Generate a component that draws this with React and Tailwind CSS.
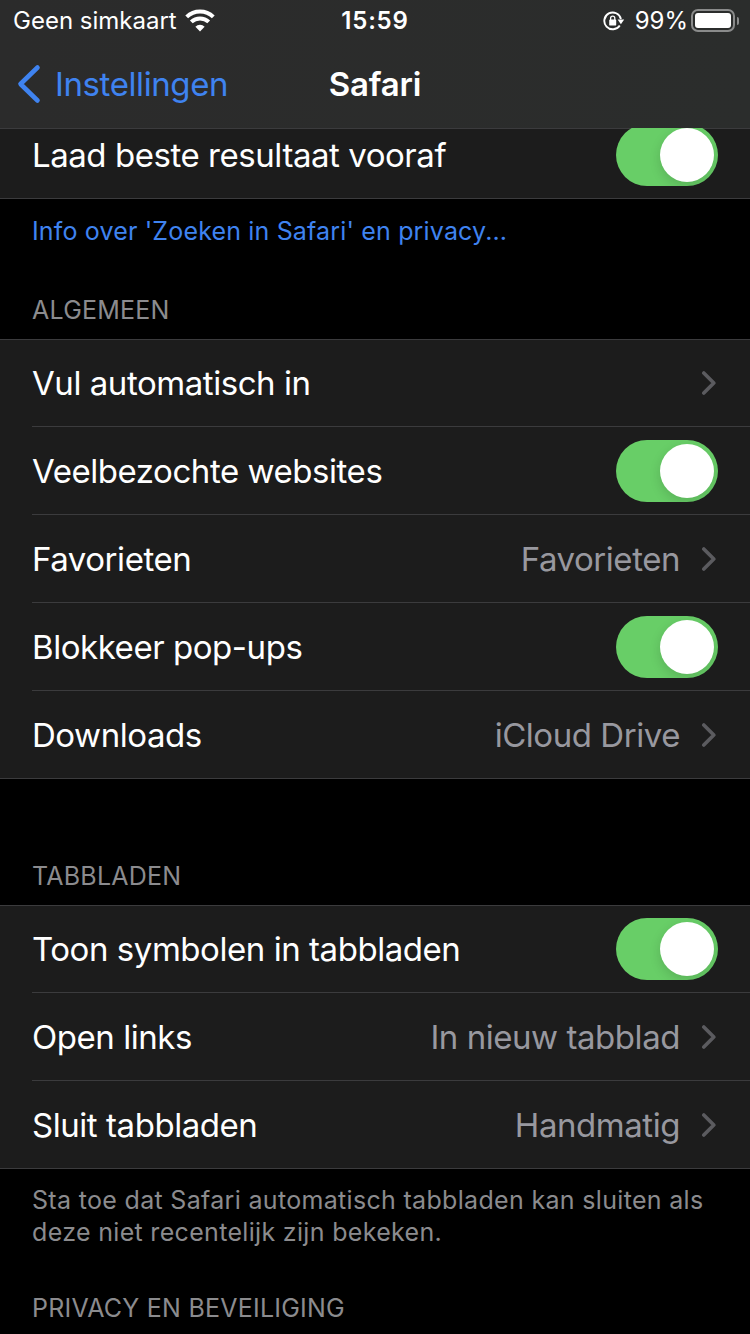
const ROW_TEXT = "text-[33px] leading-none tracking-[-0.45px]";

// Row groups as they appear on the Safari settings page
const general = [
  { label: "Vul automatisch in", type: "link" },
  { label: "Veelbezochte websites", type: "toggle" },
  { label: "Favorieten", type: "link", value: "Favorieten" },
  { label: "Blokkeer pop-ups", type: "toggle" },
  { label: "Downloads", type: "link", value: "iCloud Drive" },
];

const tabs = [
  { label: "Toon symbolen in tabbladen", type: "toggle" },
  { label: "Open links", type: "link", value: "In nieuw tabblad" },
  { label: "Sluit tabbladen", type: "link", value: "Handmatig" },
];

function WifiIcon() {
  return (
    <svg width="30" height="23" viewBox="0 0 30 23" fill="none" stroke="#fff" strokeWidth="4">
      <path d="M1.7 7.9a19.2 19.2 0 0 1 26.6 0" />
      <path d="M6.3 12.9a12.5 12.5 0 0 1 17.4 0" />
      <path d="M15 22.4l-4.6-4.7a6.6 6.6 0 0 1 9.2 0z" fill="#fff" stroke="none" />
    </svg>
  );
}

function RotationLockIcon() {
  return (
    <svg width="22" height="20" viewBox="0 0 22 20" fill="none">
      <path d="M16.8 14.4A8.4 8.4 0 1 1 17.9 8" stroke="#fff" strokeWidth="1.9" />
      <path d="M14.6 8.5h6.6l-3.3 4.8z" fill="#fff" />
      <rect x="6.2" y="8.6" width="7" height="6" rx="0.9" fill="#fff" />
      <path d="M7.6 9V7.2a2.1 2.1 0 0 1 4.2 0V9" stroke="#fff" strokeWidth="1.3" />
    </svg>
  );
}

function Battery() {
  return (
    <div className="flex items-center gap-0.5">
      <div className="h-[23px] w-11 rounded-[7px] border-2 border-[#8a8b8b] p-0.5">
        <div className="h-full rounded-[3px] bg-white" />
      </div>
      <div className="h-2 w-0.5 rounded-r-full bg-[#8a8b8b]" />
    </div>
  );
}

function Chevron() {
  return (
    <svg width="16" height="26" viewBox="0 0 16 26" fill="none" stroke="#5b5b5f" strokeWidth="3.6" strokeLinecap="round" strokeLinejoin="round" className="mr-0.5">
      <path d="M3.8 3l10 10-10 10" />
    </svg>
  );
}

function Toggle() {
  return (
    <div className="flex h-[62px] w-[102px] justify-end overflow-hidden rounded-full bg-[#68ce67] p-1">
      <div className="size-[54px] rounded-full bg-white shadow-[0_4px_12px_rgba(0,0,0,0.14)]" />
    </div>
  );
}

function Row({ item, first, last }) {
  return (
    <div className={`h-[88px] ${first ? "border-t border-[#3b3b3d]" : ""} ${last ? "border-b border-[#3b3b3d]" : "pl-8"}`}>
      <div className={`flex h-full items-center pr-8 ${first ? "" : "pt-px"} ${last ? "pl-8" : "border-b border-[#3b3b3d]"}`}>
        <span className={`flex-1 text-white ${ROW_TEXT}`}>{item.label}</span>
        {item.value && <span className={`mr-5 text-[#98989f] ${ROW_TEXT}`}>{item.value}</span>}
        {item.type === "toggle" ? <Toggle /> : <Chevron />}
      </div>
    </div>
  );
}

function Group({ items }) {
  return (
    <div className="bg-[#1c1c1c]">
      {items.map((item, i) => (
        <Row key={item.label} item={item} first={i === 0} last={i === items.length - 1} />
      ))}
    </div>
  );
}

function SectionTitle({ children }) {
  return <h2 className="px-8 text-[25px] leading-8 tracking-[0.23px] text-[#8b8b8e]">{children}</h2>;
}

export default function App() {
  return (
    <div className="h-[1334px] w-[750px] overflow-hidden bg-black font-['Inter','Liberation_Sans',sans-serif]">
      <header className="h-32 bg-linear-to-r from-[#2b2b2b] to-[#2b2d2c] text-white">
        {/* Status bar */}
        <div className="grid h-10 grid-cols-3 items-center pt-px text-2xl">
          <div className="flex items-center gap-2 pl-[13px]">
            <span className="whitespace-nowrap pt-px">Geen simkaart</span>
            <WifiIcon />
          </div>
          <span className="pt-px text-center font-semibold tracking-[0.8px]">15:59</span>
          <div className="flex items-center justify-end pr-[11px]">
            <RotationLockIcon />
            <span className="ml-2.5 mr-[3px] pt-px">99%</span>
            <Battery />
          </div>
        </div>
        {/* Navigation bar */}
        <div className="grid h-[88px] grid-cols-3 items-center text-[33px]">
          <div className="flex items-center gap-[13px] pl-4 text-[#3f83f0]">
            <svg width="26" height="40" viewBox="0 0 26 40" fill="none" stroke="currentColor" strokeWidth="4.6" strokeLinecap="round" strokeLinejoin="round">
              <path d="M21.5 3.5L4.5 20l17 16.5" />
            </svg>
            <span className="pt-0.5 tracking-[-0.4px]">Instellingen</span>
          </div>
          <h1 className="pt-0.5 text-center font-semibold tracking-[-0.2px]">Safari</h1>
        </div>
      </header>

      <main>
        {/* Row scrolled partly under the navigation bar */}
        <div className="relative flex h-[71px] flex-col justify-end overflow-hidden bg-[#1c1c1c]">
          <div className="absolute inset-x-0 top-0 h-px bg-[#3b3b3d]" />
          <div className="relative">
            <Row item={{ label: "Laad beste resultaat vooraf", type: "toggle" }} last />
          </div>
        </div>
        <p className="px-8 pt-4 text-[25px] leading-8 tracking-[0.16px] text-[#3f83f0]">Info over 'Zoeken in Safari' en privacy...</p>

        <div className="pb-[13px] pt-[47px]">
          <SectionTitle>ALGEMEEN</SectionTitle>
        </div>
        <Group items={general} />

        <div className="pb-[13px] pt-[81px]">
          <SectionTitle>TABBLADEN</SectionTitle>
        </div>
        <Group items={tabs} />
        <p className="px-8 pt-[15px] text-[25px] leading-8 tracking-[0.32px] text-[#8b8b8e]">
          Sta toe dat Safari automatisch tabbladen kan sluiten als
          <br />
          deze niet recentelijk zijn bekeken.
        </p>

        <div className="pt-11">
          <SectionTitle>PRIVACY EN BEVEILIGING</SectionTitle>
        </div>
      </main>
    </div>
  );
}
